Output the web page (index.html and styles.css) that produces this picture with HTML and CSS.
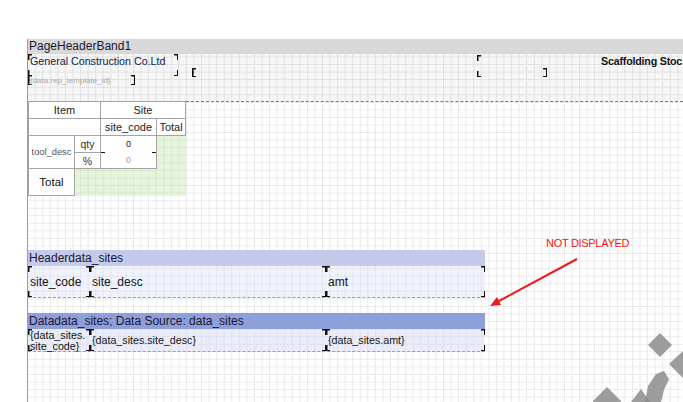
FILE: index.html
```html
<!DOCTYPE html>
<html lang="en">
<head>
    <meta charset="UTF-8">
    <meta name="viewport" content="width=device-width, initial-scale=1.0">
    <title>Report Designer - Scaffolding Stock</title>
    <link rel="stylesheet" href="styles.css">
</head>
<body>
    <div class="designer">
        <svg class="grid" viewBox="28 39 655 363" width="655" height="363">
            <defs>
                <pattern id="cells" x="4.5" y="3.6" width="7.56" height="7.56" patternUnits="userSpaceOnUse">
                    <line x1="0" y1="0.5" x2="7.56" y2="0.5" />
                    <line x1="0.5" y1="0" x2="0.5" y2="7.56" />
                </pattern>
            </defs>
            <rect x="28" y="39" width="655" height="363" fill="url(#cells)" />
        </svg>

        <div class="surface">
            <div class="band-title page-title">PageHeaderBand1</div>
            <div class="page-header">
                <div class="comp company">General Construction Co.Ltd</div>
                <div class="comp template-id">{data.rep_template_id}</div>
                <div class="comp blank-line"></div>
                <div class="comp title-box"></div>
                <div class="report-title">Scaffolding Stoc</div>
            </div>

            <div class="cross-zone">
                <div class="crosstab">
                    <div class="cell head-item">Item</div>
                    <div class="cell head-site">Site</div>
                    <div class="cell head-blank"></div>
                    <div class="cell">site_code</div>
                    <div class="cell">Total</div>
                    <div class="cell row-desc">tool_desc</div>
                    <div class="cell small">qty</div>
                    <div class="cell value">
                        <span>0</span>
                        <span class="muted">0</span>
                    </div>
                    <div class="total-fill col-fill"></div>
                    <div class="cell small pct">%</div>
                    <div class="cell row-total">Total</div>
                    <div class="total-fill row-fill"></div>
                </div>
                <div class="zone-edge"></div>
            </div>

            <div class="band">
                <div class="band-title header-title">Headerdata_sites</div>
                <div class="band-body header-body">
                    <div class="comp col-code">site_code</div>
                    <div class="comp col-desc">site_desc</div>
                    <div class="comp col-amt">amt</div>
                </div>
            </div>

            <div class="band data-band">
                <div class="band-title data-title">Datadata_sites; Data Source: data_sites</div>
                <div class="band-body data-body">
                    <div class="comp col-code wrap">{data_sites.<br>site_code}</div>
                    <div class="comp col-desc">{data_sites.site_desc}</div>
                    <div class="comp col-amt">{data_sites.amt}</div>
                </div>
            </div>
        </div>

        <div class="note">NOT DISPLAYED</div>

        <svg class="overlay" viewBox="28 39 655 363" width="655" height="363">
            <g class="watermark">
                <polygon points="660,333 672,345 660,357 648,345" />
                <polygon points="683,351 669,364 683,378" />
                <polygon points="656,374 664,371 669,379 664,390 661,402 645,402 648,386" />
                <polygon points="641,389 650,402 631,402" />
                <polygon points="607,387 621,401 621,402 593,402 593,401" />
            </g>
            <line class="arrow-line" x1="577" y1="259" x2="497" y2="302" />
            <polygon class="arrow-head" points="490,306 501,305 497,297" />
        </svg>
    </div>
</body>
</html>
```

FILE: styles.css
```css
* {
    margin: 0;
    padding: 0;
    box-sizing: border-box;
}

body {
    background: white;
    font-family: "Liberation Sans", Arial, sans-serif;
    overflow: hidden;
}

.designer {
    position: relative;
    margin: 39px 0 0 27px;
    width: 656px;
    height: 363px;
    border-left: 1px solid #9c9c9c;
    overflow: hidden;
}

.grid,
.overlay {
    position: absolute;
    left: 0;
    top: 0;
}

.grid line {
    stroke: #d6d6d6;
    stroke-width: 1;
    stroke-dasharray: 1 1;
}

.overlay {
    z-index: 2;
    pointer-events: none;
}

.surface {
    position: relative;
    z-index: 1;
}

/* component corner marks */
.comp {
    background-image:
        linear-gradient(#111, #111), linear-gradient(#111, #111),
        linear-gradient(#111, #111), linear-gradient(#111, #111),
        linear-gradient(#111, #111), linear-gradient(#111, #111),
        linear-gradient(#111, #111), linear-gradient(#111, #111);
    background-position:
        left top, left top,
        right top, right top,
        left bottom, left bottom,
        right bottom, right bottom;
    background-size:
        1.5px 6px, 4px 1.5px,
        1.5px 6px, 4px 1.5px,
        1.5px 6px, 4px 1.5px,
        1.5px 6px, 4px 1.5px;
    background-repeat: no-repeat;
}

.band-title {
    height: 16px;
    line-height: 16px;
    font-size: 12px;
    padding-left: 1px;
    color: #1c1430;
    white-space: nowrap;
}

.page-title {
    height: 15px;
    line-height: 15px;
    background: #d8d8d8;
}

.page-header {
    position: relative;
    height: 47px;
    background: rgba(0, 0, 0, 0.035);
}

.page-header .comp {
    position: absolute;
}

.company {
    left: 0;
    top: 0;
    width: 150px;
    height: 22px;
    padding: 1px 2px;
    font-size: 10.7px;
    color: #0e1d4d;
}

.template-id {
    left: 0;
    top: 21px;
    width: 107px;
    height: 10px;
    padding: 1px 2px;
    font-size: 8px;
    line-height: 9px;
    color: #a8a8a8;
}

.blank-line {
    left: 164px;
    top: 14px;
    width: 355px;
    height: 9px;
}

.title-box {
    left: 449px;
    top: 1px;
    width: 400px;
    height: 22px;
}

.report-title {
    position: absolute;
    left: 573px;
    top: 1px;
    font-size: 10.7px;
    font-weight: bold;
    letter-spacing: -0.2px;
    color: #141414;
    white-space: nowrap;
}

/* cross tab */
.cross-zone {
    display: flex;
    align-items: flex-start;
    height: 149px;
}

.crosstab {
    display: grid;
    grid-template-columns: 46px 26px 56px 29px;
    grid-template-rows: 17px 17px 17px 16px 27px;
    border-top: 1px solid #a4a4a4;
    border-left: 1px solid #a4a4a4;
}

.zone-edge {
    flex: 1;
    border-top: 1px dashed #7a7a7a;
}

.cell {
    display: flex;
    align-items: center;
    justify-content: center;
    background: white;
    border-right: 1px solid #a4a4a4;
    border-bottom: 1px solid #a4a4a4;
    font-size: 11px;
    color: #222;
}

.head-item { grid-column: 1 / 3; }
.head-site { grid-column: 3 / 5; }
.head-blank { grid-column: 1 / 3; }

.row-desc {
    grid-row: 3 / 5;
    font-size: 9.3px;
    color: #4a5264;
}

.small {
    font-size: 10.5px;
    color: #333;
}

.pct {
    grid-column: 2;
    grid-row: 4;
}

.value {
    grid-column: 3;
    grid-row: 3 / 5;
    flex-direction: column;
    justify-content: space-around;
    font-size: 9px;
    color: #111;
    background-image: linear-gradient(#111, #111), linear-gradient(#111, #111);
    background-position: left center, right center;
    background-size: 4px 1px, 4px 1px;
    background-repeat: no-repeat;
    background-color: white;
}

.value .muted { color: #9a9a9a; }

.row-total {
    grid-column: 1;
    grid-row: 5;
    font-size: 11.5px;
    color: #111;
}

.total-fill {
    background: rgba(190, 225, 160, 0.38);
}

.col-fill {
    grid-column: 4;
    grid-row: 3 / 6;
}

.row-fill {
    grid-column: 2 / 4;
    grid-row: 5;
}

/* data bands */
.band {
    width: 457px;
}

.data-band {
    margin-top: 15px;
}

.header-title { background: #c4cbea; }
.data-title { background: #8ea0dc; }

.band-body {
    display: flex;
    border-bottom: 1px dashed #8f9dd6;
}

.header-body {
    height: 32px;
    background: rgba(215, 222, 245, 0.35);
    font-size: 12px;
}

.data-body {
    height: 23px;
    background: rgba(205, 213, 243, 0.4);
    font-size: 10.7px;
}

.band-body .comp {
    display: flex;
    align-items: center;
    padding-left: 2px;
    color: #141414;
}

.col-code { width: 62px; }
.col-desc { width: 236px; }
.col-amt { width: 159px; }

.band-body .wrap {
    display: block;
    line-height: 11px;
    padding-top: 1px;
}

.note {
    position: absolute;
    z-index: 2;
    left: 518px;
    top: 198px;
    font-size: 11px;
    letter-spacing: -0.3px;
    color: #f01818;
    white-space: nowrap;
}

.watermark polygon {
    fill: #8c8c8c;
    opacity: 0.85;
}

.arrow-line {
    stroke: #f01818;
    stroke-width: 2;
}

.arrow-head {
    fill: #f01818;
}
```
